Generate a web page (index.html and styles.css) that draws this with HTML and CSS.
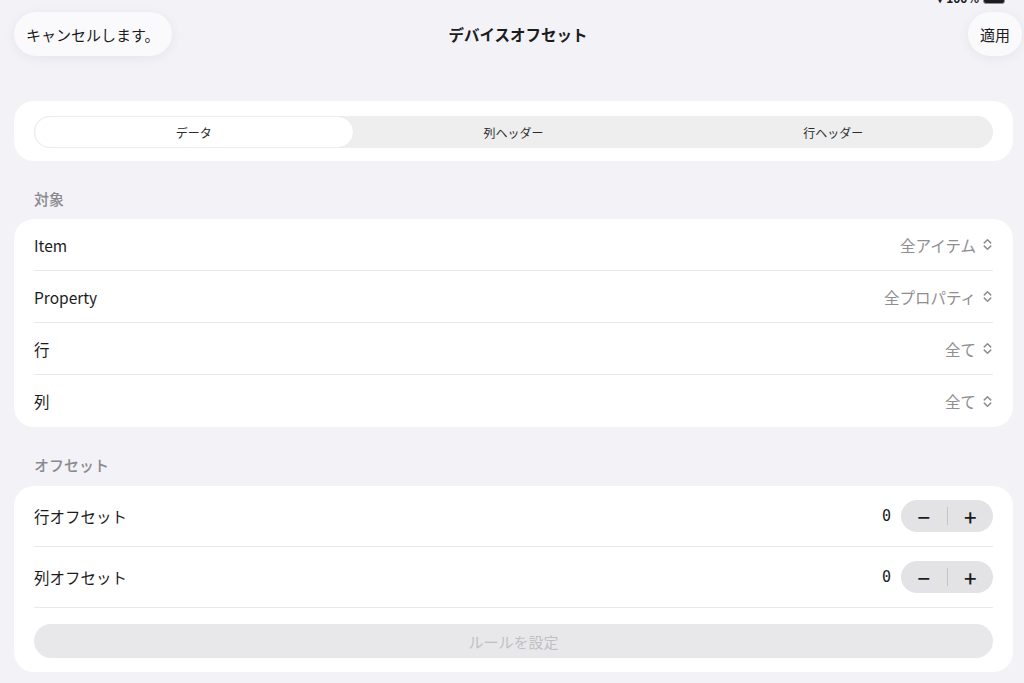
FILE: index.html
```html
<!DOCTYPE html>
<html lang="ja">
<head>
  <meta charset="UTF-8">
  <meta name="viewport" content="width=device-width, initial-scale=1.0">
  <title>デバイスオフセット</title>
  <link rel="stylesheet" href="styles.css">
</head>
<body>
  <div class="status-bar">
    <span class="status-text">▾ 100%</span>
    <span class="battery"></span>
  </div>

  <header class="nav">
    <div class="nav-left"><button class="pill">キャンセルします。</button></div>
    <h1 class="nav-title">デバイスオフセット</h1>
    <div class="nav-right"><button class="pill">適用</button></div>
  </header>

  <main class="sheet">
    <section class="card card-segment">
      <div class="segmented">
        <div class="segment active">データ</div>
        <div class="segment">列ヘッダー</div>
        <div class="segment">行ヘッダー</div>
      </div>
    </section>

    <h2 class="section-title">対象</h2>
    <section class="card">
      <div class="row">
        <span class="label">Item</span>
        <span class="picker">全アイテム <svg class="updown" viewBox="0 0 10 14"><path d="M2 5.5 5 2.5 8 5.5M2 8.5 5 11.5 8 8.5"/></svg></span>
      </div>
      <div class="row">
        <span class="label">Property</span>
        <span class="picker">全プロパティ <svg class="updown" viewBox="0 0 10 14"><path d="M2 5.5 5 2.5 8 5.5M2 8.5 5 11.5 8 8.5"/></svg></span>
      </div>
      <div class="row">
        <span class="label">行</span>
        <span class="picker">全て <svg class="updown" viewBox="0 0 10 14"><path d="M2 5.5 5 2.5 8 5.5M2 8.5 5 11.5 8 8.5"/></svg></span>
      </div>
      <div class="row">
        <span class="label">列</span>
        <span class="picker">全て <svg class="updown" viewBox="0 0 10 14"><path d="M2 5.5 5 2.5 8 5.5M2 8.5 5 11.5 8 8.5"/></svg></span>
      </div>
    </section>

    <h2 class="section-title">オフセット</h2>
    <section class="card card-offset">
      <div class="row row-tall">
        <span class="label">行オフセット</span>
        <div class="stepper-group">
          <span class="value">0</span>
          <div class="stepper">
            <button class="step">−</button>
            <span class="step-divider"></span>
            <button class="step">+</button>
          </div>
        </div>
      </div>
      <div class="row row-tall">
        <span class="label">列オフセット</span>
        <div class="stepper-group">
          <span class="value">0</span>
          <div class="stepper">
            <button class="step">−</button>
            <span class="step-divider"></span>
            <button class="step">+</button>
          </div>
        </div>
      </div>
      <button class="rule-button" disabled>ルールを設定</button>
    </section>
  </main>
</body>
</html>
```

FILE: styles.css
```css
body {
  margin: 0;
  background-color: #f2f2f7;
  font-family: 'Noto Sans CJK JP', 'Noto Sans', sans-serif;
  color: #1c1c1e;
  height: 683px;
  overflow: hidden;
}

button {
  font-family: inherit;
}

/* status bar, mostly scrolled off the top */
.status-bar {
  height: 4px;
  overflow: hidden;
  display: flex;
  justify-content: flex-end;
  align-items: flex-end;
  gap: 4px;
  padding-right: 19px;
}

.status-text {
  font-size: 12px;
  font-weight: 600;
  line-height: 12px;
  color: #1c1c1e;
}

.battery {
  width: 22px;
  height: 10px;
  border: 1.5px solid #8e8e93;
  border-radius: 3px;
  background: #1c1c1e;
  box-sizing: border-box;
}

/* navigation */
.nav {
  display: grid;
  grid-template-columns: 1fr auto 1fr;
  align-items: center;
  padding: 8px 2px 0 14px;
  height: 44px;
}

.nav-right {
  display: flex;
  justify-content: flex-end;
}

.pill {
  height: 44px;
  padding: 0 12px;
  border: none;
  border-radius: 22px;
  background-color: #fafafd;
  box-shadow: 0 2px 12px rgba(0, 0, 0, 0.06);
  font-size: 15px;
  color: #1c1c1e;
}

.nav-title {
  margin: 0;
  font-size: 15.5px;
  font-weight: 700;
}

/* content */
.sheet {
  padding: 45px 11px 0 14px;
}

.card {
  background: #ffffff;
  border-radius: 20px;
  padding: 0 20px;
}

.card-segment {
  padding: 15px 20px 13px;
}

.segmented {
  display: grid;
  grid-template-columns: 1fr 1fr 1fr;
  height: 32px;
  background: #eeeeef;
  border-radius: 16px;
}

.segment {
  display: flex;
  align-items: center;
  justify-content: center;
  font-size: 12px;
  color: #2c2c2e;
}

.segment.active {
  background: #ffffff;
  border: 1px solid #ececee;
  border-radius: 16px;
}

.section-title {
  margin: 0;
  padding: 26px 20px 9px;
  font-size: 15px;
  font-weight: 500;
  color: #8a8a8e;
  line-height: 23px;
}

.section-title + .card-offset {
  margin-top: 1px;
}

.row {
  display: flex;
  align-items: center;
  justify-content: space-between;
  height: 52px;
  border-bottom: 1px solid #e9e9eb;
  box-sizing: border-box;
}

.row:last-child {
  border-bottom: none;
}

.label {
  font-size: 15.5px;
  color: #1c1c1e;
}

.picker {
  display: flex;
  align-items: center;
  gap: 6px;
  font-size: 15.5px;
  color: #8e8e93;
}

.updown {
  width: 11px;
  height: 15px;
  fill: none;
  stroke: #8e8e93;
  stroke-width: 1.4;
  stroke-linecap: round;
  stroke-linejoin: round;
}

.row-tall {
  height: 61px;
}

.stepper-group {
  display: flex;
  align-items: center;
  gap: 10px;
}

.value {
  font-family: 'DejaVu Sans Mono', monospace;
  font-size: 15px;
}

.stepper {
  display: flex;
  align-items: center;
  width: 92px;
  height: 32px;
  border-radius: 16px;
  background: #e3e3e6;
}

.step {
  flex: 1;
  height: 32px;
  border: none;
  background: none;
  font-size: 22px;
  font-weight: 500;
  color: #1c1c1e;
  padding: 0;
  line-height: 32px;
}

.step-divider {
  width: 1px;
  height: 18px;
  background: #c4c4c8;
}

.card-offset {
  padding-bottom: 14px;
}

.card-offset .row-tall:nth-child(2) {
  border-bottom: 1px solid #e9e9eb;
}

.rule-button {
  display: block;
  width: 100%;
  height: 34px;
  margin-top: 16px;
  border: none;
  border-radius: 17px;
  background: #e8e8ea;
  color: #c0c0c4;
  font-size: 15px;
}
```
